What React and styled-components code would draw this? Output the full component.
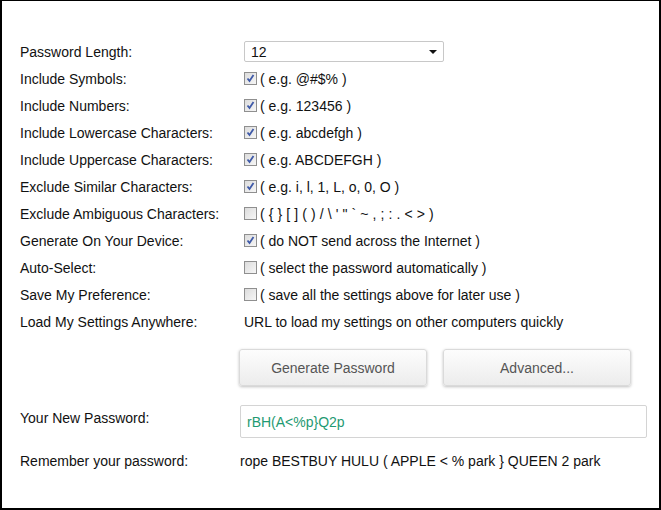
import React from 'react'
import styled, { createGlobalStyle } from 'styled-components'

const Global = createGlobalStyle`
  html, body {
    margin: 0;
    padding: 0;
    background: #fff;
  }
  body {
    font-family: "Liberation Sans", Arial, sans-serif;
    font-size: 14px;
    color: #111;
  }
`

const Frame = styled.div`
  box-sizing: border-box;
  width: 661px;
  height: 510px;
  border-style: solid;
  border-color: #000;
  border-width: 1px 2px 2px 2px;
  padding: 37px 0 0 18px;
`

const Form = styled.div`
  display: grid;
  grid-template-columns: 224px 1fr;
  grid-auto-rows: 27px;
  align-items: center;
`

const Label = styled.div`
  white-space: nowrap;
`

const Value = styled.div`
  display: flex;
  align-items: center;
  white-space: nowrap;
`

const Select = styled.div`
  box-sizing: border-box;
  width: 200px;
  height: 21px;
  border: 1px solid #c8c8c8;
  border-radius: 2px;
  display: flex;
  align-items: center;
  justify-content: space-between;
  padding: 0 6px 0 6px;
  background: #fff;
`

const Arrow = styled.span`
  width: 0;
  height: 0;
  border-left: 4px solid transparent;
  border-right: 4px solid transparent;
  border-top: 4px solid #111;
`

const Box = styled.span`
  box-sizing: border-box;
  width: 13px;
  height: 13px;
  border: 1px solid #8f8f8f;
  background: linear-gradient(135deg, #dcdcdc, #f6f6f6);
  margin-right: 3px;
  display: inline-flex;
  align-items: center;
  justify-content: center;
`

const Note = styled.span`
  letter-spacing: ${p => (p.wide ? '0.1px' : '0')};
`

const Buttons = styled.div`
  display: flex;
  gap: 16px;
  margin: 14px 0 0 219px;
`

const Button = styled.button`
  box-sizing: border-box;
  width: 188px;
  height: 37px;
  border: 1px solid #dadada;
  border-radius: 3px;
  background: linear-gradient(#fdfdfd, #ececec);
  box-shadow: 0 1px 3px rgba(0, 0, 0, 0.25);
  font-family: "Liberation Sans", Arial, sans-serif;
  font-size: 14px;
  color: #555;
  padding: 0;
`

const Output = styled.div`
  display: grid;
  grid-template-columns: 220px 1fr;
  align-items: center;
  margin-top: ${p => p.top}px;
`

const OutLabel = styled.div`
  margin-top: ${p => p.shift || 0}px;
`

const Field = styled.div`
  box-sizing: border-box;
  width: 407px;
  height: 33px;
  border: 1px solid #d4d4d4;
  border-radius: 2px;
  padding: 0 6px;
  display: flex;
  align-items: center;
  color: #1f9a72;
`

const Phrase = styled.div`
  color: #111;
`

const Check = () => (
  <svg width="9" height="9" viewBox="0 0 9 9">
    <path d="M1.5 4.5 L3.5 7 L7.5 1" fill="none" stroke="#3f5aa8" strokeWidth="1.8" />
  </svg>
)

const rows = [
  ['Include Symbols:', true, '( e.g. @#$% )'],
  ['Include Numbers:', true, '( e.g. 123456 )'],
  ['Include Lowercase Characters:', true, '( e.g. abcdefgh )'],
  ['Include Uppercase Characters:', true, '( e.g. ABCDEFGH )'],
  ['Exclude Similar Characters:', true, '( e.g. i, l, 1, L, o, 0, O )'],
  ['Exclude Ambiguous Characters:', false, '( { } [ ] ( ) / \\ \' " ` ~ , ; : . < > )', true],
  ['Generate On Your Device:', true, '( do NOT send across the Internet )'],
  ['Auto-Select:', false, '( select the password automatically )'],
  ['Save My Preference:', false, '( save all the settings above for later use )'],
]

const App = () => {
  return (
    <Frame>
      <Global />
      <Form>
        <Label>Password Length:</Label>
        <Value>
          <Select>
            <span>12</span>
            <Arrow />
          </Select>
        </Value>
        {rows.map(([label, on, note, wide]) => (
          <React.Fragment key={label}>
            <Label>{label}</Label>
            <Value>
              <Box>{on && <Check />}</Box>
              <Note wide={wide}>{note}</Note>
            </Value>
          </React.Fragment>
        ))}
        <Label>Load My Settings Anywhere:</Label>
        <Value>URL to load my settings on other computers quickly</Value>
      </Form>
      <Buttons>
        <Button>Generate Password</Button>
        <Button>Advanced...</Button>
      </Buttons>
      <Output top={19}>
        <OutLabel shift={-8}>Your New Password:</OutLabel>
        <Field>rBH(A&lt;%p}Q2p</Field>
      </Output>
      <Output top={15}>
        <OutLabel>Remember your password:</OutLabel>
        <Phrase>rope BESTBUY HULU ( APPLE &lt; % park } QUEEN 2 park</Phrase>
      </Output>
    </Frame>
  )
}

export default App
